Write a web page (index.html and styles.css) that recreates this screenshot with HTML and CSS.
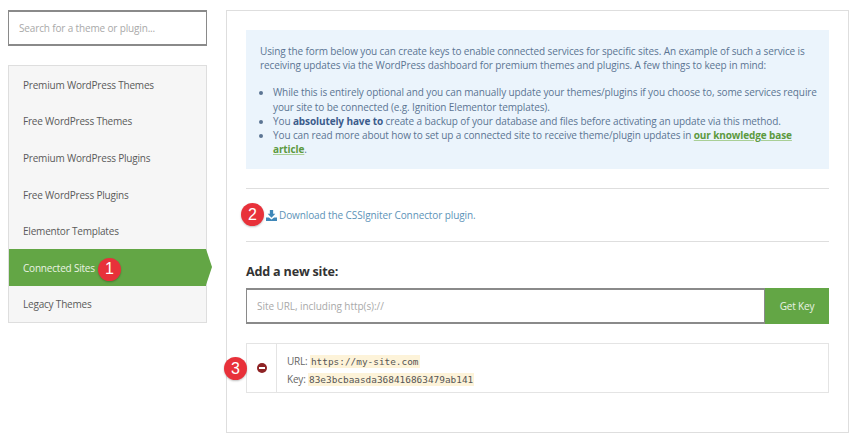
FILE: index.html
```html
<!DOCTYPE html>
<html lang="en">
<head>
<meta charset="utf-8">
<title>Connected Sites</title>
<link rel="stylesheet" href="styles.css">
</head>
<body>
<div class="page">
  <aside class="sidebar">
    <input class="search" type="text" placeholder="Search for a theme or plugin...">
    <nav class="nav">
      <a class="nav-item">Premium WordPress Themes</a>
      <a class="nav-item">Free WordPress Themes</a>
      <a class="nav-item">Premium WordPress Plugins</a>
      <a class="nav-item">Free WordPress Plugins</a>
      <a class="nav-item">Elementor Templates</a>
      <a class="nav-item active">Connected Sites<span class="badge badge-1">1</span></a>
      <a class="nav-item">Legacy Themes</a>
    </nav>
  </aside>
  <main class="main">
    <section class="notice">
      <p>Using the form below you can create keys to enable connected services for specific sites. An example of such a service is receiving updates via the WordPress dashboard for premium themes and plugins. A few things to keep in mind:</p>
      <ul>
        <li>While this is entirely optional and you can manually update your themes/plugins if you choose to, some services require your site to be connected (e.g. Ignition Elementor templates).</li>
        <li>You <strong>absolutely have to</strong> create a backup of your database and files before activating an update via this method.</li>
        <li>You can read more about how to set up a connected site to receive theme/plugin updates in <a class="kb">our knowledge base article</a>.</li>
      </ul>
    </section>
    <div class="download">
      <span class="badge badge-2">2</span>
      <svg class="dl-icon" viewBox="0 0 12 12" width="11" height="11"><path d="M4.2 0h3.6v4.2h2.4L6 8.4 1.8 4.2h2.4z"/><path d="M0 8.2h3.2L6 10.4l2.8-2.2H12V12H0z"/></svg>
      <a class="dl-link">Download the CSSIgniter Connector plugin.</a>
    </div>
    <h2 class="title">Add a new site:</h2>
    <form class="key-form">
      <input class="url" type="text" placeholder="Site URL, including http(s)://">
      <button class="get-key" type="button">Get Key</button>
    </form>
    <div class="site">
      <span class="badge badge-3">3</span>
      <div class="site-action">
        <svg viewBox="0 0 10 10" width="10" height="10"><circle cx="5" cy="5" r="5" fill="#8e2325"/><rect x="2" y="4" width="6" height="2" fill="#fff"/></svg>
      </div>
      <div class="site-info">
        <div>URL: <code>https://my-site.com</code></div>
        <div>Key: <code>83e3bcbaasda368416863479ab141</code></div>
      </div>
    </div>
  </main>
</div>
</body>
</html>
```
FILE: styles.css
```css
* { box-sizing: border-box; }
html, body { margin: 0; height: 100%; }
body {
  background: #fff;
  font-family: "Open Sans", "Liberation Sans", sans-serif;
  font-size: 10px;
  letter-spacing: -0.2px;
  color: #4c4c4c;
  overflow: hidden;
}
.page {
  display: flex;
  align-items: flex-start;
  gap: 19px;
  padding: 10px 12px 0 8px;
}
.sidebar { width: 199px; flex: none; }
.search {
  display: block;
  width: 100%;
  height: 36px;
  padding: 0 10px;
  border: 1px solid #8a8a8a;
  border-width: 2px 1.5px;
  background: #fff;
  font: inherit;
  letter-spacing: -0.15px;
  outline: none;
}
.search::placeholder, .url::placeholder { color: #a9a9a9; opacity: 1; }
.nav {
  margin-top: 19px;
  border: 1px solid #dedede;
  background: #f6f6f6;
  display: flex;
  flex-direction: column;
}
.nav-item {
  position: relative;
  display: flex;
  align-items: center;
  height: 36.6px;
  padding: 1px 0 0 14px;
  color: #5a5a5a;
}
.nav-item.active {
  background: #63a645;
  color: #eaf3e4;
}
.nav-item.active::after {
  content: "";
  position: absolute;
  left: 100%;
  top: 0;
  border-left: 6px solid #63a645;
  border-top: 18.3px solid transparent;
  border-bottom: 18.3px solid transparent;
}
.badge {
  position: absolute;
  width: 23px;
  height: 23px;
  border-radius: 50%;
  background: #e8313a;
  color: #fff;
  font-family: "Liberation Sans", sans-serif;
  font-size: 16px;
  letter-spacing: 0;
  display: flex;
  align-items: center;
  justify-content: center;
  box-shadow: 0 1px 2px rgba(0, 0, 0, .25);
}
.badge-1 { left: 89px; top: 9px; }
.badge-2 { left: -5px; top: 14px; }
.badge-3 { left: -23px; top: 13px; }
.main {
  width: 623px;
  height: 423px;
  flex: none;
  border: 1px solid #dedede;
  padding: 19px 19px 0;
}
.notice {
  height: 139px;
  background: #ebf4fc;
  padding: 13.6px 8px 0 14px;
  letter-spacing: -0.11px;
  color: #5b7493;
  line-height: 14.2px;
}
.notice p { margin: 0 0 13.4px; }
.notice ul { margin: 0; padding-left: 13px; }
.notice strong { color: #3b5c8c; font-weight: 700; }
.kb {
  color: #5c9a3f;
  font-weight: 700;
  text-decoration: underline;
  text-decoration-color: #a9cf96;
}
.download {
  position: relative;
  display: flex;
  align-items: center;
  gap: 2px;
  margin-top: 19px;
  height: 54px;
  padding-left: 20px;
  border-top: 1px solid #dedede;
  border-bottom: 1px solid #dedede;
  letter-spacing: -0.1px;
}
.dl-icon { fill: #3f87b8; flex: none; }
.dl-link { color: #5d93b8; }
.title {
  margin: 21px 0 8px;
  font-size: 12.6px;
  line-height: 17px;
  font-weight: 700;
  color: #333;
}
.key-form { display: flex; height: 36px; }
.url {
  flex: 1;
  min-width: 0;
  padding: 0 10px;
  border: 1px solid #8a8a8a;
  border-width: 2px 1.5px;
  font: inherit;
  letter-spacing: -0.06px;
  outline: none;
}
.get-key {
  width: 64px;
  border: 0;
  background: #63a645;
  color: #eaf3e4;
  font: inherit;
  letter-spacing: inherit;
  padding: 0;
}
.site {
  position: relative;
  display: flex;
  margin-top: 19px;
  height: 50px;
  border: 1px solid #e4e4e4;
}
.site-action {
  width: 30px;
  flex: none;
  border-right: 1px solid #e4e4e4;
  display: flex;
  align-items: center;
  justify-content: center;
}
.site-info {
  padding: 8px 10px;
  line-height: 18px;
  color: #666;
}
code {
  font-family: "DejaVu Sans Mono", "Liberation Mono", monospace;
  font-size: 9.42px;
  line-height: 1;
  letter-spacing: 0;
  background: #fdf3d9;
  color: #555;
  padding: 1px 1px;
}
```
